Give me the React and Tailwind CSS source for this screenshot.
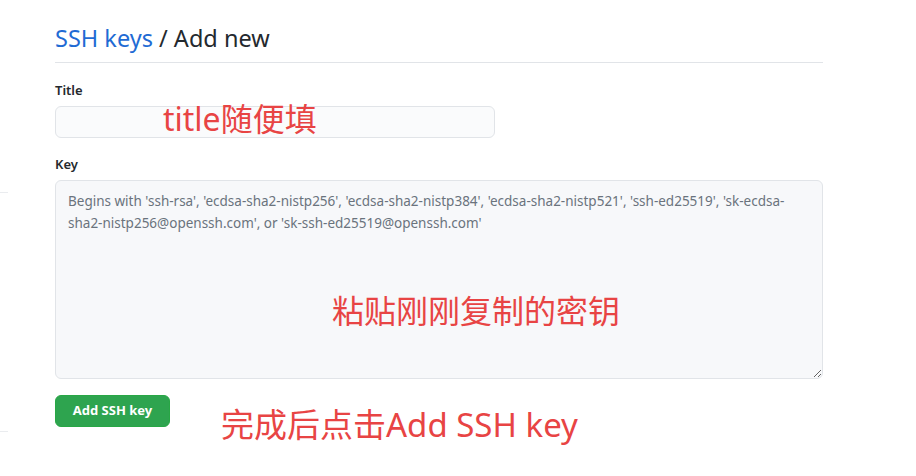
const FONT = { fontFamily: '"Noto Sans", "Open Sans", "Noto Sans CJK SC", sans-serif' }

export default function App() {
  return (
    <div className="relative flex h-[476px] w-[916px] overflow-hidden bg-white text-[#24292e]" style={FONT}>
      {/* sidebar edge remnants */}
      <div className="w-[8px] shrink-0">
        <div className="mt-[192px] h-px w-full bg-[#eaecef]" />
        <div className="mt-[238px] h-px w-full bg-[#eaecef]" />
      </div>

      <div className="ml-[47px] w-[768px] pt-[23px]">
        <h2 className="border-b border-[#e1e4e8] pb-[9px] text-[23.5px] leading-[30px] font-normal">
          <a className="text-[#1f6bd4]">SSH keys</a> / Add new
        </h2>

        <form className="mt-[18px]">
          <label className="block text-[13px] leading-[18px] font-semibold">Title</label>
          <input
            type="text"
            className="mt-[7px] block h-[32px] w-[440px] rounded-[6px] border border-[#e1e4e8] bg-[#fafbfc] px-3 text-sm"
          />

          <label className="mt-[17px] block text-[13px] leading-[18px] font-semibold">Key</label>
          <textarea
            className="mt-[7px] block h-[199px] w-[768px] resize-y rounded-[6px] border border-[#e1e4e8] bg-[#f7f8fa] px-[12px] py-[9px] text-[13.5px] leading-[22px] placeholder:text-[#6a737d]"
            placeholder="Begins with 'ssh-rsa', 'ecdsa-sha2-nistp256', 'ecdsa-sha2-nistp384', 'ecdsa-sha2-nistp521', 'ssh-ed25519', 'sk-ecdsa-sha2-nistp256@openssh.com', or 'sk-ssh-ed25519@openssh.com'"
          />

          <button
            type="button"
            className="mt-[16px] h-[32px] w-[115px] rounded-[6px] border border-[#28a745] bg-[#2ea44f] text-[13px] font-bold text-white"
          >
            Add SSH key
          </button>
        </form>
      </div>

      {/* red annotations */}
      <span className="absolute left-[163px] top-[99px] text-[32px] leading-[40px] text-[#e84444]" style={{ fontFamily: '"Noto Sans", "Noto Sans CJK SC", sans-serif' }}>
        title随便填
      </span>
      <span className="absolute left-[332px] top-[289px] text-[32px] leading-[40px] text-[#e84444]" style={{ fontFamily: '"Noto Sans CJK SC", sans-serif' }}>
        粘贴刚刚复制的密钥
      </span>
      <span className="absolute left-[221px] top-[404px] text-[33px] leading-[41px] text-[#e84444]" style={{ fontFamily: '"Noto Sans", "Noto Sans CJK SC", sans-serif' }}>
        完成后点击Add SSH key
      </span>
    </div>
  )
}
